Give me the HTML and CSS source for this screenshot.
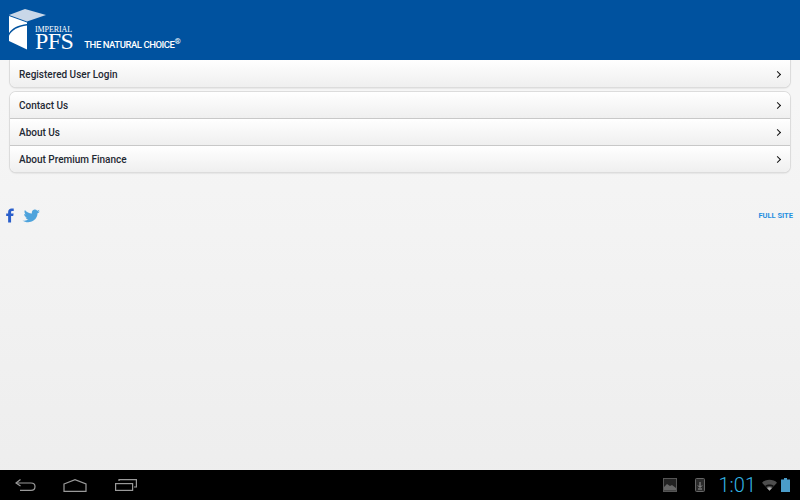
FILE: index.html
```html
<!DOCTYPE html>
<html lang="en">
<head>
<meta charset="UTF-8" />
<meta name="viewport" content="width=device-width, initial-scale=1" />
<title>Imperial PFS</title>
<link rel="stylesheet" href="styles.css">
</head>
<body>

<header class="top-bar">
  <div class="logo">
    <svg class="logo-mark" width="38" height="41" viewBox="0 0 38 41">
      <path d="M0 6 L16 0 L37 6 L18 12.5 Z" fill="#c9d7e8"/>
      <path d="M0 7 L18 13.5 L18 15 C9 16 3 19 0 24 Z" fill="#fff"/>
      <path d="M0 26.5 C3 21 9 17.5 18 16.5 L18 40.5 L0 32 Z" fill="#fff"/>
    </svg>
    <div class="logo-text">
      <span class="logo-small">IMPERIAL</span>
      <span class="logo-big">PFS</span>
    </div>
  </div>
  <div class="tagline">THE NATURAL CHOICE<sup>®</sup></div>
</header>

<main class="content">
  <ul class="menu menu-first">
    <li><a href="#">Registered User Login<span class="chev"></span></a></li>
  </ul>
  <ul class="menu">
    <li><a href="#">Contact Us<span class="chev"></span></a></li>
    <li><a href="#">About Us<span class="chev"></span></a></li>
    <li><a href="#">About Premium Finance<span class="chev"></span></a></li>
  </ul>

  <div class="social-row">
    <div class="social">
      <svg width="8" height="15" viewBox="0 0 9 16"><path d="M2.4 16 V8.6 H0.2 V5.8 H2.4 V4 C2.4 1.4 4 0 6.2 0 C7.2 0 8.2 0.1 8.7 0.2 V2.8 H7.2 C6 2.8 5.7 3.3 5.7 4.2 V5.8 H8.6 L8.1 8.6 H5.7 V16 Z" fill="#2a5fcb"/></svg>
      <svg width="19" height="14" viewBox="0 0 18 14"><path d="M0 11.5 C3 13.6 7.5 14 11 11.6 C14 9.6 15 6.6 15 4.2 C15.7 3.9 16.6 3.4 17.4 2.4 C16.6 2.7 16.2 2.8 15.6 2.8 C16.3 2.3 16.8 1.6 17 0.8 C16.3 1.2 15.6 1.6 14.8 1.7 C14 0.8 13 0.5 12 0.6 C10.2 0.8 9 2.6 9.4 4.5 C6.6 4.4 4.2 3.2 2.4 1 C1.6 2.6 2 4.2 3.2 5.4 C2.6 5.4 2.1 5.2 1.6 5 C1.7 6.8 2.8 8 4.6 8.4 C4 8.6 3.5 8.6 3 8.5 C3.6 9.8 4.7 10.5 6 10.6 C4.4 11.7 2.2 12 0 11.5 Z" fill="#4ea3dc"/></svg>
    </div>
    <a class="full-site" href="#">FULL SITE</a>
  </div>
</main>

<footer class="nav-bar">
  <div class="nav-buttons">
    <svg width="21" height="12" viewBox="0 0 21 12" fill="none" stroke="#9a9a9a" stroke-width="1.2"><path d="M5.5 0.5 L1 4 L5.5 7"/><path d="M1 4 H16 C19 4 20 5.6 20 7.5 C20 9.6 19 11.4 16 11.4 H5"/></svg>
    <svg width="24" height="13" viewBox="0 0 24 13" fill="none" stroke="#9a9a9a" stroke-width="1.2"><path d="M1 5 L12 0.7 L23 5 V12.4 H1 Z"/></svg>
    <svg class="nav-recent" width="22" height="12" viewBox="0 0 22 12" fill="none" stroke="#9a9a9a" stroke-width="1.2"><rect x="0.6" y="4.6" width="17" height="6.8"/><path d="M4 2 V0.6 H21.4 V8 H19"/></svg>
  </div>
  <div class="status">
    <svg width="14" height="14" viewBox="0 0 14 14"><rect x="0.5" y="0.5" width="13" height="13" fill="#222" stroke="#555"/><path d="M1 12.5 V9 L4 6 L7 8 L9 7 L13 10 V12.5 Z" fill="#666"/></svg>
    <svg class="status-dl" width="10" height="14" viewBox="0 0 10 14"><rect x="0.5" y="0.5" width="9" height="13" rx="1" fill="#2a2a2a" stroke="#666"/><path d="M5 4 V9 M3 7.5 L5 9.5 L7 7.5 M3 11 H7" stroke="#999" fill="none"/></svg>
    <span class="clock">1:01</span>
    <svg class="status-wifi" width="15" height="12" viewBox="0 0 16 12"><path d="M0 3.5 C4 -0.5 12 -0.5 16 3.5 L8 12 Z" fill="#4d4d4d"/><path d="M3.2 7 C6 5 10 5 12.8 7 L11.6 8.2 C9.5 6.6 6.5 6.6 4.4 8.2 Z" fill="#111"/><path d="M5.4 9.2 C7 8.2 9 8.2 10.6 9.2 L8 12 Z" fill="#aaa"/></svg>
    <svg width="9" height="14" viewBox="0 0 9 14"><rect x="3" y="0" width="3" height="2" fill="#4a9cc9"/><rect x="0" y="1.5" width="9" height="12.5" fill="#4a9cc9"/></svg>
  </div>
</footer>

</body>
</html>
```

FILE: styles.css
```css
* {
  box-sizing: border-box;
}
html, body {
  height: 100%;
}
body {
  margin: 0;
  font-family: Roboto, "Liberation Sans", sans-serif;
  background: linear-gradient(#f6f6f6 20%, #ededed 100%);
  color: #222;
  display: flex;
  flex-direction: column;
}

/* Header */
.top-bar {
  position: relative;
  z-index: 1;
  height: 60px;
  background: #00529f;
  color: white;
  display: flex;
  align-items: flex-start;
  padding: 9px 0 0 9px;
  flex-shrink: 0;
}
.logo {
  display: flex;
}
.logo-mark {
  display: block;
}
.logo-text {
  margin-left: -12px;
  padding-top: 17px;
  display: flex;
  flex-direction: column;
  font-family: "Liberation Serif", serif;
}
.logo-small {
  font-size: 8px;
  line-height: 7px;
  letter-spacing: -0.1px;
}
.logo-big {
  font-size: 24px;
  line-height: 16px;
  letter-spacing: -0.6px;
}
.tagline {
  margin: 29px 0 0 11px;
  font-size: 9.5px;
  font-weight: 500;
  letter-spacing: -0.45px;
  line-height: 14px;
  white-space: nowrap;
}
.tagline sup {
  font-size: 8px;
  font-weight: 700;
  line-height: 0;
}

/* Menu lists */
.content {
  flex-grow: 1;
  padding: 0 10px;
}
.menu {
  list-style: none;
  margin: 0 0 5px;
  padding: 0;
  background: #fff;
  border-radius: 6px;
  box-shadow: 0 0 0 1px #dcdcdc, 0 1px 2px rgba(0,0,0,0.2);
  overflow: hidden;
}
.menu-first {
  border-radius: 0 0 6px 6px;
}
.menu li + li {
  border-top: 1px solid #c8c8c8;
}
.menu a {
  height: 26px;
  padding: 0 8px 0 9px;
  display: flex;
  align-items: center;
  justify-content: space-between;
  background: linear-gradient(#ffffff, #efefef);
  color: #1f2933;
  font-size: 10px;
  font-weight: 500;
  text-decoration: none;
}
.menu-first a {
  height: 27px;
  padding-top: 1px;
}
.chev {
  width: 5px;
  height: 5px;
  margin-right: 2px;
  border-top: 1.6px solid #111;
  border-right: 1.6px solid #111;
  transform: rotate(45deg);
}

/* Social row */
.social-row {
  margin: 36px -3px 0 -4px;
  display: flex;
  align-items: center;
  justify-content: space-between;
}
.social {
  display: flex;
  align-items: center;
  gap: 8px;
}
.social svg {
  display: block;
}
.full-site {
  color: #1f8fe0;
  font-size: 7.5px;
  font-weight: 700;
  text-decoration: none;
}

/* Android nav bar */
.nav-bar {
  height: 30px;
  background: #000;
  display: flex;
  align-items: center;
  justify-content: space-between;
  padding: 0 10px 0 15px;
  flex-shrink: 0;
}
.nav-buttons {
  display: flex;
  align-items: center;
  gap: 27px;
}
.nav-recent {
  margin-left: 1px;
}
.status {
  display: flex;
  align-items: center;
}
.status-dl {
  margin-left: 18px;
}
.clock {
  margin-left: 14px;
  color: #33b5e5;
  font-size: 20px;
  font-weight: 300;
}
.status-wifi {
  margin: 0 4px 0 6px;
}
```
